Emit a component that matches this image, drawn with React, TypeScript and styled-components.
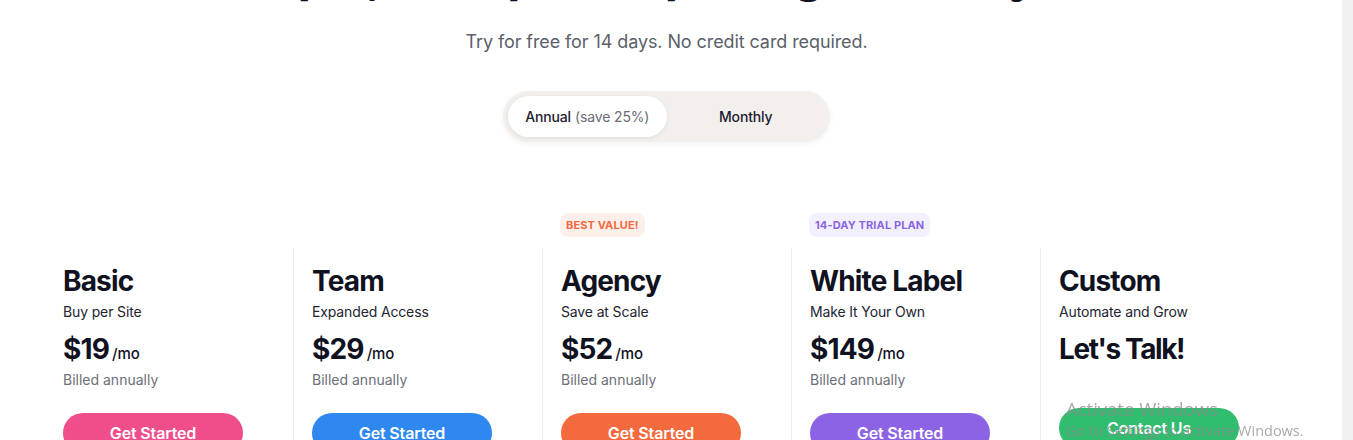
import React from "react";
import styled, { createGlobalStyle } from "styled-components";

const GlobalStyle = createGlobalStyle`
  * {
    box-sizing: border-box;
  }
  html,
  body {
    margin: 0;
    padding: 0;
    height: 100%;
    overflow: hidden;
    background: #ffffff;
  }
  body {
    font-family: "Inter", "Noto Sans", sans-serif;
    color: #10121f;
  }
`;

type Plan = {
  name: string;
  tagline: string;
  price: string;
  unit?: string;
  billed?: string;
  cta: string;
  color: string;
  badge?: { label: string; fg: string; bg: string };
};

const plans: Plan[] = [
  {
    name: "Basic",
    tagline: "Buy per Site",
    price: "$19",
    unit: "/mo",
    billed: "Billed annually",
    cta: "Get Started",
    color: "#ef4e8a",
  },
  {
    name: "Team",
    tagline: "Expanded Access",
    price: "$29",
    unit: "/mo",
    billed: "Billed annually",
    cta: "Get Started",
    color: "#2e88ef",
  },
  {
    name: "Agency",
    tagline: "Save at Scale",
    price: "$52",
    unit: "/mo",
    billed: "Billed annually",
    cta: "Get Started",
    color: "#f36a3e",
    badge: { label: "Best Value!", fg: "#f0693f", bg: "#fdefea" },
  },
  {
    name: "White Label",
    tagline: "Make It Your Own",
    price: "$149",
    unit: "/mo",
    billed: "Billed annually",
    cta: "Get Started",
    color: "#8c63e4",
    badge: { label: "14-Day Trial Plan", fg: "#8a67e0", bg: "#f3f0fd" },
  },
  {
    name: "Custom",
    tagline: "Automate and Grow",
    price: "Let's Talk!",
    cta: "Contact Us",
    color: "#30bd6f",
  },
];

const App = () => {
  return (
    <Page>
      <GlobalStyle />
      <Main>
        <Heading>Simple, transparent pricing for everyone</Heading>
        <Lead>Try for free for 14 days. No credit card required.</Lead>
        <ToggleRow>
          <Toggle>
            <ToggleOption $active>
              Annual <span className="toggle__save">(save 25%)</span>
            </ToggleOption>
            <ToggleOption>Monthly</ToggleOption>
          </Toggle>
        </ToggleRow>
        <PlanGrid>
          {plans.map((plan, i) => (
            <Column key={plan.name}>
              <BadgeSlot>
                {plan.badge && (
                  <Badge $fg={plan.badge.fg} $bg={plan.badge.bg}>
                    {plan.badge.label}
                  </Badge>
                )}
              </BadgeSlot>
              <Card $first={i === 0}>
                <PlanName>{plan.name}</PlanName>
                <Tagline>{plan.tagline}</Tagline>
                <Price $tight={!plan.unit}>
                  {plan.price}
                  {plan.unit && <span className="price__unit">{plan.unit}</span>}
                </Price>
                <Billed>{plan.billed ?? "\u00a0"}</Billed>
                <CtaButton $color={plan.color}>{plan.cta}</CtaButton>
              </Card>
            </Column>
          ))}
        </PlanGrid>
      </Main>
      <ScrollTrack />
      <Watermark>
        <p className="watermark__title">Activate Windows</p>
        <p className="watermark__text">Go to Settings to activate Windows.</p>
      </Watermark>
    </Page>
  );
};

const Page = styled.div`
  display: flex;
  height: 100vh;
  overflow: hidden;
`;

const Main = styled.main`
  flex: 1;
  min-width: 0;
  padding-right: 9px;
  display: flex;
  flex-direction: column;
`;

const ScrollTrack = styled.div`
  width: 11px;
  flex-shrink: 0;
  background: #f1f1f1;
`;

const Heading = styled.h1`
  margin: -49px 0 0;
  font-size: 48px;
  line-height: 48px;
  font-weight: 700;
  letter-spacing: -0.02em;
  text-align: center;
  color: #10121f;
`;

const Lead = styled.p`
  margin: 31px 0 0;
  font-size: 18px;
  line-height: 24px;
  text-align: center;
  color: #5c5f6a;
  letter-spacing: -0.005em;
`;

const ToggleRow = styled.div`
  display: flex;
  justify-content: center;
  margin-top: 37px;
`;

const Toggle = styled.div`
  display: flex;
  width: 327px;
  height: 51px;
  padding: 5px;
  border-radius: 26px;
  background: #f2efec;
  box-shadow: 0 2px 6px rgba(0, 0, 0, 0.05);
`;

const ToggleOption = styled.div<{ $active?: boolean }>`
  flex: 1;
  display: flex;
  align-items: center;
  justify-content: center;
  gap: 4px;
  border-radius: 21px;
  font-size: 14px;
  font-weight: 500;
  letter-spacing: -0.01em;
  color: #1e2030;
  background: ${(p) => (p.$active ? "#ffffff" : "transparent")};
  box-shadow: ${(p) => (p.$active ? "0 1px 4px rgba(0, 0, 0, 0.08)" : "none")};

  .toggle__save {
    color: #6b6d78;
    font-weight: 400;
  }
`;

const PlanGrid = styled.div`
  display: grid;
  grid-template-columns: repeat(5, 249px);
  width: 1245px;
  margin: 71px auto 0;
`;

const Column = styled.div`
  display: flex;
  flex-direction: column;
`;

const BadgeSlot = styled.div`
  height: 24px;
  margin-bottom: 11px;
  padding-left: 18px;
  display: flex;
`;

const Badge = styled.span<{ $fg: string; $bg: string }>`
  display: inline-flex;
  align-items: center;
  height: 24px;
  padding: 0 6px;
  border-radius: 8px;
  background: ${(p) => p.$bg};
  color: ${(p) => p.$fg};
  font-size: 11px;
  font-weight: 700;
  letter-spacing: 0.01em;
  text-transform: uppercase;
`;

const Card = styled.div<{ $first?: boolean }>`
  display: flex;
  flex-direction: column;
  align-items: flex-start;
  padding: 16px 18px 40px 18px;
  border-left: 1px solid ${(p) => (p.$first ? "transparent" : "#ececee")};
  min-height: 240px;
`;

const PlanName = styled.h2`
  margin: 0;
  font-size: 28px;
  line-height: 34px;
  font-weight: 700;
  letter-spacing: -0.03em;
  color: #10121f;
`;

const Tagline = styled.p`
  margin: 4px 0 0;
  font-size: 14px;
  line-height: 20px;
  letter-spacing: -0.01em;
  color: #23252f;
`;

const Price = styled.p<{ $tight?: boolean }>`
  margin: 10px 0 0;
  font-size: 28px;
  line-height: 34px;
  font-weight: 700;
  letter-spacing: ${(p) => (p.$tight ? "-0.05em" : "-0.03em")};
  color: #10121f;

  .price__unit {
    margin-left: 3px;
    font-size: 15px;
    font-weight: 500;
    letter-spacing: -0.01em;
  }
`;

const Billed = styled.p`
  margin: -1px 0 0;
  font-size: 14px;
  line-height: 20px;
  color: #6d6f79;
`;

const CtaButton = styled.button<{ $color: string }>`
  margin-top: 23px;
  width: 180px;
  height: 40px;
  border: none;
  border-radius: 20px;
  background: ${(p) => p.$color};
  color: #ffffff;
  font-family: "Inter", "Noto Sans", sans-serif;
  font-size: 16px;
  font-weight: 600;
  letter-spacing: -0.01em;
  cursor: pointer;
`;

const Watermark = styled.div`
  position: fixed;
  left: 1066px;
  top: 397px;
  pointer-events: none;
  font-family: "Open Sans", "Noto Sans", sans-serif;
  color: rgba(140, 140, 140, 0.75);

  p {
    margin: 0;
  }
  .watermark__title {
    font-size: 18.5px;
    line-height: 24px;
  }
  .watermark__text {
    font-size: 14.5px;
    line-height: 20px;
  }
`;

export default App;
